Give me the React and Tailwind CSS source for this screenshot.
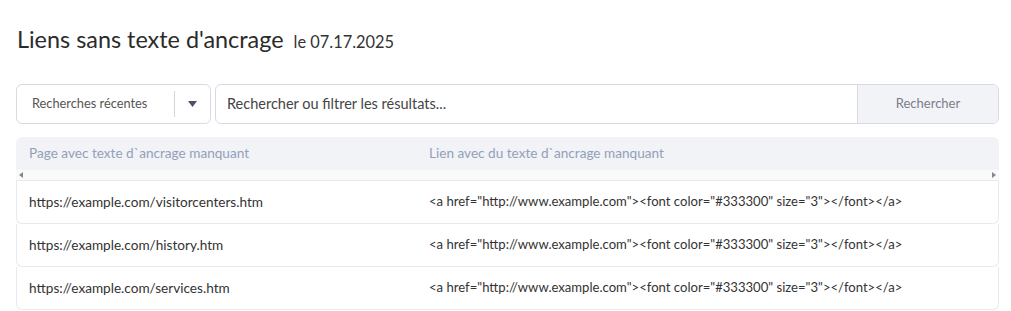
const rows = [
  'https://example.com/visitorcenters.htm',
  'https://example.com/history.htm',
  'https://example.com/services.htm',
]

const anchor = '<a href="http://www.example.com"><font color="#333300" size="3"></font></a>'

function App() {
  return (
    <div className="min-h-[311px] bg-white pl-4 pr-3 pt-[23px] font-['Lato',sans-serif] text-[#333]">
      <div className="flex items-baseline gap-[10px] pl-[1px]">
        <h1 className="text-[23.4px] leading-8 text-[#2b2b2b]">Liens sans texte d'ancrage</h1>
        <span className="text-[16.4px] text-[#333]">le 07.17.2025</span>
      </div>

      <div className="mt-[29px] flex h-10 gap-[4px]">
        <div className="flex w-[195px] items-center rounded-md border border-[#d8d9e3] bg-white">
          <span className="flex-1 pl-[15px] text-[12.8px] text-[#555]">Recherches récentes</span>
          <span className="h-[26px] w-px bg-[#d3d4dc]" />
          <span className="flex w-[35px] justify-center">
            <svg width="9" height="6" viewBox="0 0 9 6">
              <path d="M0 0h9L4.5 6z" fill="#4b5067" />
            </svg>
          </span>
        </div>
        <div className="flex flex-1 overflow-hidden rounded-md border border-[#d8d9e3]">
          <div className="flex flex-1 items-center pl-[11px] text-[14.5px] text-[#444]">
            Rechercher ou filtrer les résultats...
          </div>
          <div className="flex w-[141px] items-center justify-center border-l border-[#d8d9e3] bg-[#f2f3f6] text-[13px] text-[#7a7d8a]">
            Rechercher
          </div>
        </div>
      </div>

      <div className="mt-[13px]">
        <div className="rounded-t-md bg-[#f1f3f6]">
          <div className="grid h-[33px] grid-cols-[400px_1fr] items-center text-[13.6px] text-[#94a0ba]">
            <span className="pl-[13px]">Page avec texte d`ancrage manquant</span>
            <span className="pl-[13px]">Lien avec du texte d`ancrage manquant</span>
          </div>
        </div>
        <div className="flex h-[11px] items-center justify-between border-b border-[#e8eaf1] bg-[#fafafa] px-[3px]">
          <svg width="4" height="6" viewBox="0 0 4 6"><path d="M4 0v6L0 3z" fill="#888" /></svg>
          <svg width="4" height="6" viewBox="0 0 4 6"><path d="M0 0v6l4-3z" fill="#888" /></svg>
        </div>
        {rows.map((url) => (
          <div
            key={url}
            className="grid h-[43px] grid-cols-[400px_1fr] items-center rounded-b-md border-x border-b border-[#e8eaf1] text-[#333]"
          >
            <span className="pl-[12px] text-[13.6px]">{url}</span>
            <span className="pl-[12px] text-[13.1px]">{anchor}</span>
          </div>
        ))}
      </div>
    </div>
  )
}

export default App
